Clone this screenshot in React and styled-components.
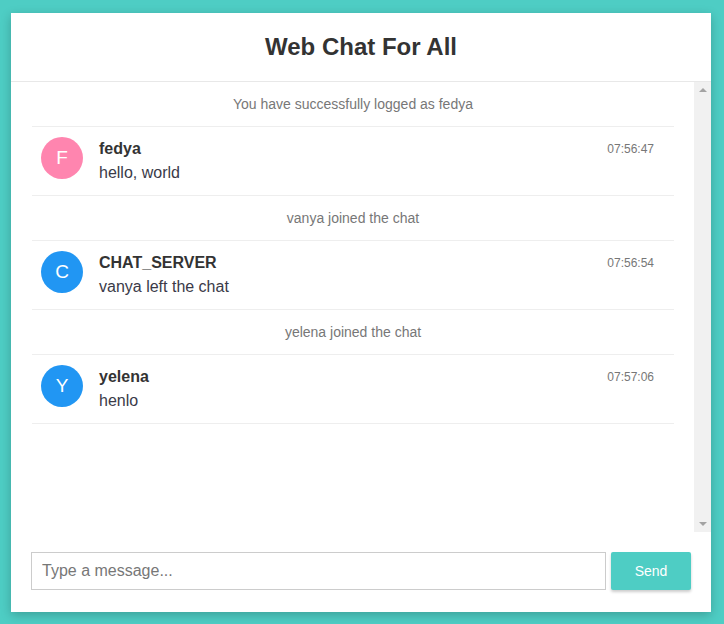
import React from 'react'
import styled, { createGlobalStyle } from 'styled-components'

const GlobalStyle = createGlobalStyle`
  html, body {
    margin: 0;
    padding: 0;
    background: #4ecdc4;
    font-family: "Liberation Sans", Arial, sans-serif;
  }
  * { box-sizing: border-box; }
`

const messages = [
  { type: 'system', text: 'You have successfully logged as fedya' },
  { type: 'msg', name: 'fedya', text: 'hello, world', time: '07:56:47', color: '#ff85af' },
  { type: 'system', text: 'vanya joined the chat' },
  { type: 'msg', name: 'CHAT_SERVER', text: 'vanya left the chat', time: '07:56:54', color: '#2196f3' },
  { type: 'system', text: 'yelena joined the chat' },
  { type: 'msg', name: 'yelena', text: 'henlo', time: '07:57:06', color: '#2196f3' },
]

const Page = styled.div`
  padding: 13px 13px 12px 11px;
`

const Card = styled.div`
  width: 700px;
  height: 599px;
  background: #fff;
  box-shadow: 0 3px 10px rgba(0, 0, 0, 0.22);
  display: flex;
  flex-direction: column;
`

const Header = styled.header`
  height: 69px;
  border-bottom: 1px solid #e8e8e8;
  display: flex;
  align-items: center;
  justify-content: center;
  h1 {
    margin: 0;
    font-size: 24px;
    font-weight: bold;
    color: #333;
  }
`

const ListWrap = styled.div`
  height: 450px;
  display: flex;
`

const List = styled.div`
  flex: 1;
  overflow-y: auto;
  padding: 0 20px 0 21px;
  scrollbar-width: none;
  &::-webkit-scrollbar { display: none; }
`

const Rail = styled.div`
  width: 17px;
  background: #f1f1f1;
  display: flex;
  flex-direction: column;
  justify-content: space-between;
  align-items: center;
  padding: 6px 0;
`

const Arrow = styled.span`
  width: 0;
  height: 0;
  border-left: 4px solid transparent;
  border-right: 4px solid transparent;
  ${p => p.down
    ? 'border-top: 4px solid #a3a3a3;'
    : 'border-bottom: 4px solid #a3a3a3;'}
`

const SystemRow = styled.div`
  border-bottom: 1px solid #eee;
  padding: 14px 0;
  line-height: 16px;
  text-align: center;
  font-size: 14px;
  color: #777;
`

const MsgRow = styled.div`
  border-bottom: 1px solid #eee;
  padding: 11px 20px 11px 9px;
  display: flex;
  align-items: flex-start;
`

const Avatar = styled.div`
  width: 42px;
  height: 42px;
  margin-top: -1px;
  border-radius: 50%;
  background: ${p => p.color};
  color: #fff;
  font-size: 19px;
  display: flex;
  align-items: center;
  justify-content: center;
  flex-shrink: 0;
  margin-right: 16px;
`

const Body = styled.div`
  flex: 1;
`

const Top = styled.div`
  display: flex;
  justify-content: space-between;
  align-items: center;
  line-height: 22px;
  margin-bottom: 2px;
`

const Name = styled.span`
  font-size: 16px;
  font-weight: bold;
  color: #333;
`

const Time = styled.span`
  font-size: 12px;
  color: #777;
`

const Text = styled.div`
  font-size: 16px;
  line-height: 22px;
  color: #3a3a48;
`

const Footer = styled.form`
  flex: 1;
  display: flex;
  align-items: center;
  padding: 0 20px 2px 20px;
  gap: 5px;
`

const Input = styled.input`
  flex: 1;
  height: 38px;
  border: 1px solid #ccc;
  padding: 0 10px;
  font-size: 16px;
  font-family: inherit;
  color: #333;
  outline: none;
  &::placeholder { color: #777; }
`

const SendButton = styled.button`
  width: 80px;
  height: 38px;
  border: none;
  border-radius: 2px;
  background: #4ecdc4;
  color: #fff;
  font-size: 14px;
  font-family: inherit;
  box-shadow: 0 2px 3px rgba(0, 0, 0, 0.2);
  cursor: pointer;
`

export default function App() {
  return (
    <Page>
      <GlobalStyle />
      <Card>
        <Header>
          <h1>Web Chat For All</h1>
        </Header>
        <ListWrap>
          <List>
            {messages.map((m, i) =>
              m.type === 'system' ? (
                <SystemRow key={i}>{m.text}</SystemRow>
              ) : (
                <MsgRow key={i}>
                  <Avatar color={m.color}>{m.name[0].toUpperCase()}</Avatar>
                  <Body>
                    <Top>
                      <Name>{m.name}</Name>
                      <Time>{m.time}</Time>
                    </Top>
                    <Text>{m.text}</Text>
                  </Body>
                </MsgRow>
              )
            )}
          </List>
          <Rail>
            <Arrow />
            <Arrow down />
          </Rail>
        </ListWrap>
        <Footer onSubmit={e => e.preventDefault()}>
          <Input placeholder="Type a message..." />
          <SendButton type="submit">Send</SendButton>
        </Footer>
      </Card>
    </Page>
  )
}
